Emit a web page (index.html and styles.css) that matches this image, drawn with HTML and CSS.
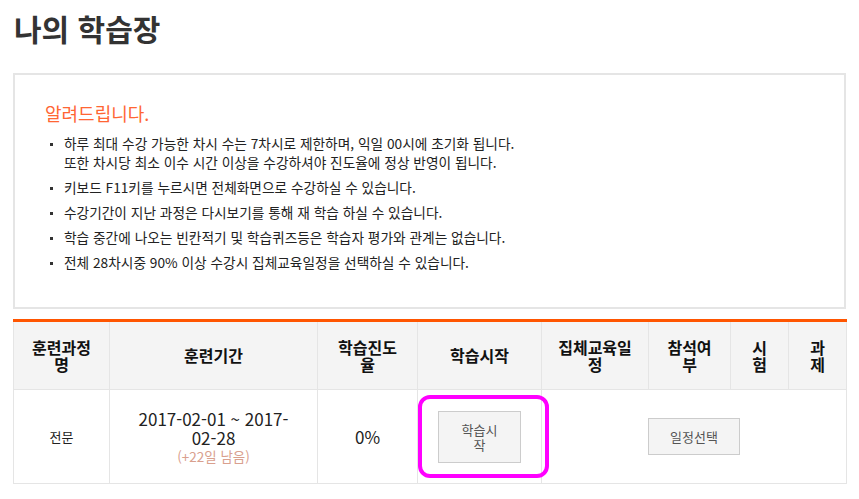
FILE: index.html
```html
<!DOCTYPE html>
<html lang="ko">
<head>
    <meta charset="UTF-8">
    <meta name="viewport" content="width=device-width, initial-scale=1.0">
    <title>나의 학습장</title>
    <link rel="stylesheet" href="styles.css">
</head>
<body>
    <div class="container">
        <h1>나의 학습장</h1>

        <div class="notice">
            <h2>알려드립니다.</h2>
            <ul>
                <li>하루 최대 수강 가능한 차시 수는 7차시로 제한하며, 익일 00시에 초기화 됩니다.<br>또한 차시당 최소 이수 시간 이상을 수강하셔야 진도율에 정상 반영이 됩니다.</li>
                <li>키보드 F11키를 누르시면 전체화면으로 수강하실 수 있습니다.</li>
                <li>수강기간이 지난 과정은 다시보기를 통해 재 학습 하실 수 있습니다.</li>
                <li>학습 중간에 나오는 빈칸적기 및 학습퀴즈등은 학습자 평가와 관계는 없습니다.</li>
                <li>전체 28차시중 90% 이상 수강시 집체교육일정을 선택하실 수 있습니다.</li>
            </ul>
        </div>

        <table class="course-table">
            <colgroup>
                <col style="width: 96px">
                <col style="width: 208px">
                <col style="width: 100px">
                <col style="width: 124px">
                <col style="width: 107px">
                <col style="width: 82px">
                <col style="width: 58px">
                <col style="width: 58px">
            </colgroup>
            <thead>
                <tr>
                    <th>훈련과정명</th>
                    <th>훈련기간</th>
                    <th>학습진도율</th>
                    <th>학습시작</th>
                    <th>집체교육일정</th>
                    <th>참석여부</th>
                    <th>시험</th>
                    <th>과제</th>
                </tr>
            </thead>
            <tbody>
                <tr>
                    <td class="name">전문</td>
                    <td class="period">
                        <span class="dates">2017-02-01 ~ 2017-<br>02-28</span>
                        <span class="remain">(+22일 남음)</span>
                    </td>
                    <td class="progress">0%</td>
                    <td class="start">
                        <div class="start-wrap">
                            <button class="btn btn-start">학습시작</button>
                            <span class="highlight"></span>
                        </div>
                    </td>
                    <td colspan="4">
                        <button class="btn">일정선택</button>
                    </td>
                </tr>
            </tbody>
        </table>
    </div>
</body>
</html>
```

FILE: styles.css
```css
body {
    margin: 0;
    background: #ffffff;
    color: #333333;
    font-family: "Noto Sans CJK KR", "Noto Sans", sans-serif;
}

.container {
    padding: 0 13px;
    width: 833px;
}

h1 {
    font-size: 30px;
    font-weight: bold;
    line-height: 40px;
    margin: 8px 0 25px 0;
    padding-left: 1px;
    color: #333;
}

.notice {
    border: 2px solid #e5e5e5;
    padding: 26px 30px 30px 30px;
    height: 176px;
}

.notice h2 {
    font-size: 18px;
    font-weight: normal;
    color: #ff6633;
    line-height: 24px;
    margin: 0 0 9px 0;
}

.notice ul {
    list-style: none;
    margin: 0;
    padding: 0;
}

.notice li {
    position: relative;
    font-size: 13.7px;
    line-height: 19px;
    padding-left: 19px;
    margin-bottom: 6px;
    color: #222;
}

.notice li::before {
    content: "";
    position: absolute;
    left: 5px;
    top: 9px;
    width: 3px;
    height: 3px;
    background: #333;
}

.course-table {
    margin-top: 10px;
    width: 833px;
    table-layout: fixed;
    border-collapse: collapse;
    border-top: 3px solid #ff5500;
}

.course-table th {
    background: #f4f4f4;
    font-size: 16px;
    font-weight: bold;
    line-height: 17px;
    height: 67px;
    padding: 0 15px;
    border: 1px solid #e5e5e5;
    border-top: none;
    color: #111;
}

.course-table td {
    height: 93px;
    padding: 0 15px;
    border: 1px solid #e5e5e5;
    text-align: center;
    vertical-align: middle;
    font-size: 13px;
    color: #222;
}

.course-table td.period {
    padding: 0 10px;
}

.dates {
    display: block;
    font-size: 17px;
    line-height: 19px;
}

.remain {
    display: block;
    margin-top: 1px;
    font-size: 13.5px;
    line-height: 17px;
    color: #d9a08e;
}

.course-table td.progress {
    font-size: 17px;
}

.start-wrap {
    position: relative;
    display: inline-block;
}

.btn {
    font-family: "Noto Sans CJK KR", "Noto Sans", sans-serif;
    font-size: 13px;
    line-height: 15px;
    color: #555;
    background: #f4f4f4;
    border: 1px solid #cccccc;
    padding: 10px 21px;
    border-radius: 0;
    cursor: pointer;
}

.btn-start {
    width: 83px;
    padding: 10px 18px;
    display: block;
}

.highlight {
    position: absolute;
    left: -20px;
    right: -28px;
    top: -16px;
    bottom: -15px;
    border: 4px solid #ff00ff;
    border-radius: 12px;
    pointer-events: none;
}
```
